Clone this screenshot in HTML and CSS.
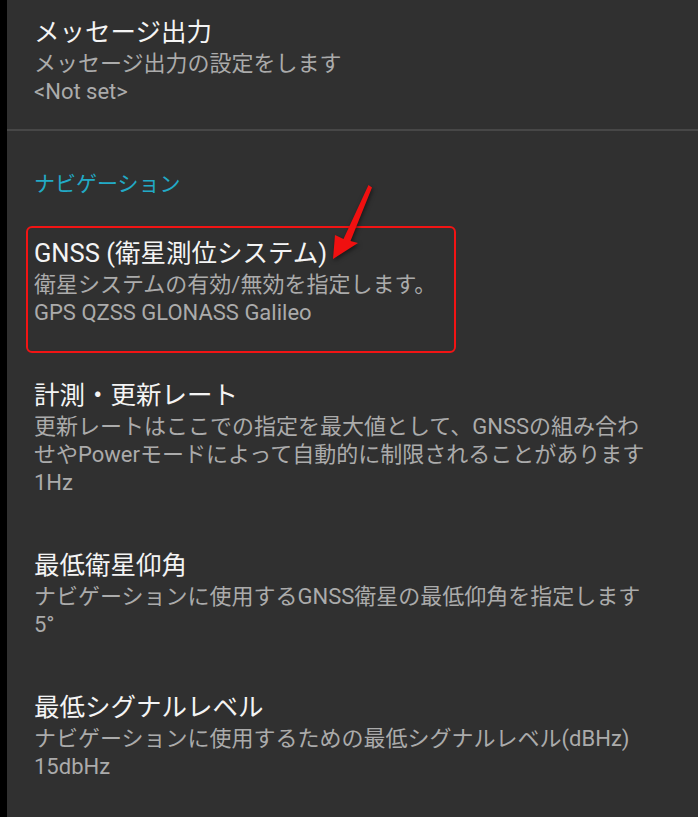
FILE: index.html
```html
<!DOCTYPE html>
<html lang="ja">
<head>
  <meta charset="UTF-8" />
  <meta name="viewport" content="width=device-width, initial-scale=1.0" />
  <title>設定</title>
  <link rel="stylesheet" href="styles.css">
</head>
<body>
  <div class="screen">
    <div class="pref first">
      <div class="pref-title">メッセージ出力</div>
      <div class="pref-summary">メッセージ出力の設定をします</div>
      <div class="pref-value">&lt;Not set&gt;</div>
    </div>

    <div class="divider"></div>

    <div class="category">ナビゲーション</div>

    <div class="pref marked">
      <div class="pref-title">GNSS (衛星測位システム)</div>
      <div class="pref-summary">衛星システムの有効/無効を指定します。</div>
      <div class="pref-value">GPS QZSS GLONASS Galileo</div>
      <span class="mark-box"></span>
      <svg class="mark-arrow" width="60" height="85" viewBox="0 0 60 85">
        <polygon points="48.5,5 52,7.5 30.5,61 38,63 13,79 15,55 23.5,59" fill="#f01010" />
      </svg>
    </div>

    <div class="pref">
      <div class="pref-title">計測・更新レート</div>
      <div class="pref-summary">更新レートはここでの指定を最大値として、GNSSの組み合わせやPowerモードによって自動的に制限されることがあります</div>
      <div class="pref-value">1Hz</div>
    </div>

    <div class="pref">
      <div class="pref-title">最低衛星仰角</div>
      <div class="pref-summary">ナビゲーションに使用するGNSS衛星の最低仰角を指定します</div>
      <div class="pref-value">5°</div>
    </div>

    <div class="pref">
      <div class="pref-title">最低シグナルレベル</div>
      <div class="pref-summary">ナビゲーションに使用するための最低シグナルレベル(dBHz)</div>
      <div class="pref-value">15dbHz</div>
    </div>
  </div>
</body>
</html>
```

FILE: styles.css
```css
html, body {
  margin: 0;
  padding: 0;
  background: #000;
  font-family: Roboto, "Noto Sans CJK JP", sans-serif;
}
.screen {
  margin-left: 7px;
  height: 817px;
  overflow: hidden;
  background: #303030;
}
.pref {
  position: relative;
  padding: 26px 48px 25px 27px;
}
.pref.first {
  padding-top: 15px;
  padding-bottom: 23px;
}
.pref-title {
  font-size: 25.5px;
  line-height: 35px;
  color: #f4f4f4;
}
.pref-summary,
.pref-value {
  font-size: 22px;
  line-height: 28px;
  color: #ababab;
}
.divider {
  height: 2px;
  background: #474747;
}
.category {
  padding: 39px 27px 12px;
  font-size: 21px;
  line-height: 28px;
  color: #22aac6;
}
.mark-box {
  position: absolute;
  top: 16px;
  bottom: -1px;
  left: 19px;
  width: 430px;
  box-sizing: border-box;
  border: 2px solid #f21414;
  border-radius: 6px;
}
.mark-arrow {
  position: absolute;
  left: 313px;
  top: -30px;
  filter: drop-shadow(1px 2px 2px rgba(0, 0, 0, 0.5));
}
```
